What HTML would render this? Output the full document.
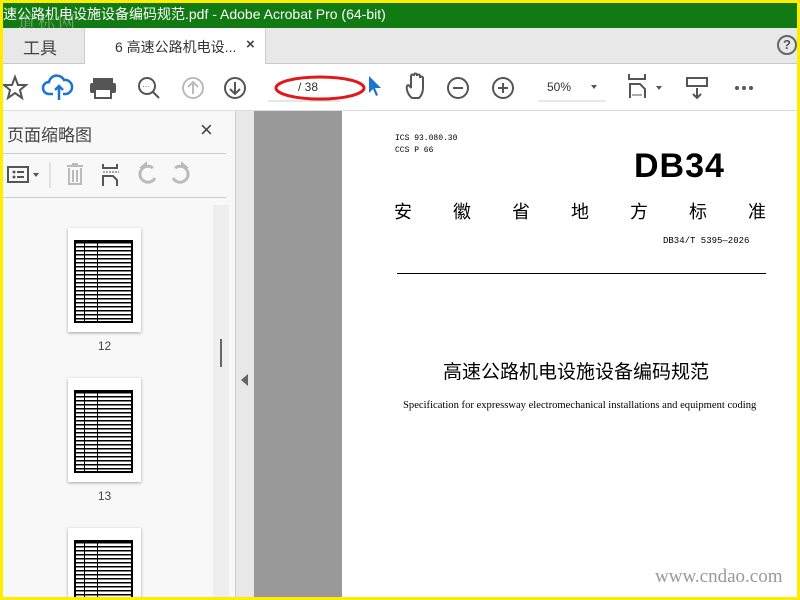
<!DOCTYPE html>
<html><head><meta charset="utf-8"><style>
*{margin:0;padding:0;box-sizing:border-box}
html,body{width:800px;height:600px;overflow:hidden}
body{background:#ffec00;position:relative;font-family:"Liberation Sans","Noto Sans CJK SC",sans-serif}
.a{position:absolute}
.title{left:3px;top:3px;width:794px;height:25px;background:#127a12;color:#fff;font-size:14px;line-height:22px;white-space:nowrap;overflow:hidden}
.tabs{left:3px;top:28px;width:794px;height:36px;background:#e8e8e8;border-bottom:1px solid #c8c8c8}
.tb{left:3px;top:64px;width:794px;height:47px;background:#fff;border-bottom:1px solid #ddd}
.lp{left:3px;top:111px;width:232px;height:486px;background:#f8f8f8;overflow:hidden}
.ico{stroke:#555;fill:none;stroke-width:2}
.thumb{position:absolute;left:65px;width:73px;height:104px;background:#fff;box-shadow:0 1px 3px rgba(0,0,0,.35);overflow:hidden}
.tbl{position:absolute;left:6px;top:12px;width:59px;height:83px;border:2px solid #000;background:repeating-linear-gradient(#000 0 1.5px,#fff 1.5px 4px);}
.tbl:after{content:"";position:absolute;left:8px;top:0;width:14px;height:100%;background:linear-gradient(90deg,#000 0 1px,transparent 1px 13px,#000 13px)}
.num{position:absolute;width:73px;left:65px;text-align:center;font-size:12px;color:#444}
</style></head><body>
<div class="a title">速公路机电设施设备编码规范.pdf - Adobe Acrobat Pro (64-bit)</div>
<div class="a" style="left:18px;top:8px;color:rgba(190,200,190,.55);font-size:17px;font-family:'Noto Serif CJK SC',serif;letter-spacing:3px">道标网</div>
<div class="a tabs">
 <div class="a" style="left:20px;top:6px;font-size:17px;color:#444">工具</div>
 <div class="a" style="left:81px;top:0;width:182px;height:36px;background:#fff;border-left:1px solid #ccc;border-right:1px solid #ccc"></div>
 <div class="a" style="left:112px;top:9px;font-size:14px;color:#333">6 高速公路机电设...</div>
 <div class="a" style="left:243px;top:8px;font-size:15px;color:#444;font-weight:bold">×</div>
 <div class="a" style="left:774px;top:7px;width:20px;height:20px;border:2px solid #666;border-radius:50%;text-align:center;font-size:13px;line-height:16px;font-weight:bold;color:#555">?</div>
</div>
<div class="a tb">
<svg class="a" style="left:0;top:0" width="794" height="47">
 <polygon class="ico" points="12,13 15,21 23,21 17,26 19,34 12,29 5,34 7,26 1,21 9,21"/>
 <path d="M50 30h-4a6 6 0 0 1 0-12a8 8 0 0 1 15-2a6 6 0 0 1 2 14h-3M56 36v-14M52 26l4-4l4 4" stroke="#1b74d2" stroke-width="2.5" fill="none"/>
 <rect x="90" y="14" width="20" height="6" fill="#555"/><rect x="87" y="19" width="26" height="10" rx="2" fill="#555"/><rect x="92" y="25" width="16" height="9" fill="#fff" stroke="#555" stroke-width="2"/>
 <circle class="ico" cx="144" cy="22" r="8"/><path class="ico" d="M150 28l6 6" stroke-width="3"/><text x="139" y="25" font-size="8" fill="#555">···</text>
 <circle cx="190" cy="24" r="10" stroke="#bbb" stroke-width="2" fill="none"/><path d="M190 30v-12M185 23l5-5l5 5" stroke="#bbb" stroke-width="2" fill="none"/>
 <circle class="ico" cx="232" cy="24" r="10"/><path class="ico" d="M232 18v12M227 25l5 5l5-5"/>
 <line x1="265" y1="37" x2="337" y2="37" stroke="#ccc"/>
 <ellipse cx="317" cy="24" rx="44" ry="11" stroke="#e01818" stroke-width="3" fill="none"/>
 <path d="M366 12l12 12h-6l3 7l-2 1l-3-7l-4 4z" fill="#1b74d2"/>
 <path class="ico" d="M409 34c-4-3-6-9-5-12c1-2 3 0 4 2v-12c0-2 3-2 3 0v-1c0-2 3-2 3 0v1c0-2 3-2 3 0v2c0-2 3-2 3 0v10c0 5-2 8-4 10z"/>
 <circle class="ico" cx="455" cy="24" r="10"/><path class="ico" d="M450 24h10"/>
 <circle class="ico" cx="500" cy="24" r="10"/><path class="ico" d="M495 24h10M500 19v10"/>
 <line x1="535" y1="37" x2="603" y2="37" stroke="#ccc"/>
 <path d="M588 21h6l-3 4z" fill="#555"/>
 <path class="ico" d="M626 10v5h16v-5M627 34v-14h10l5 5v9"/><path d="M629 31h10" stroke="#555"/><path d="M653 22h6l-3 4z" fill="#555"/>
 <rect x="684" y="14" width="20" height="8" class="ico"/><path class="ico" d="M694 24v10M690 30l4 4l4-4"/>
 <circle cx="734" cy="24" r="2" fill="#555"/><circle cx="741" cy="24" r="2" fill="#555"/><circle cx="748" cy="24" r="2" fill="#555"/>
</svg>
 <div class="a" style="left:295px;top:16px;font-size:12px;color:#333">/ 38</div>
 <div class="a" style="left:544px;top:16px;font-size:12px;color:#333">50%</div>
</div>
<div class="a lp">
 <div class="a" style="left:4px;top:10px;font-size:17px;color:#444">页面缩略图</div>
 <div class="a" style="left:197px;top:6px;font-size:22px;color:#444">×</div>
 <div class="a" style="left:0;top:42px;width:223px;height:1px;background:#ccc"></div>
 <svg class="a" style="left:0;top:45px" width="230" height="40">
  <rect x="5" y="11" width="20" height="15" class="ico"/><circle cx="11" cy="16" r="1.5" fill="#555"/><circle cx="11" cy="21" r="1.5" fill="#555"/><path d="M14 16h7M14 21h7" stroke="#555" stroke-width="2"/>
  <path d="M30 17h6l-3 4z" fill="#555"/><line x1="47" y1="6" x2="47" y2="32" stroke="#ccc"/>
  <path d="M64 10h16M70 10v-2h4v2M66 12v16h12v-16M70 14v12M74 14v12" stroke="#bbb" stroke-width="2" fill="none"/>
  <path class="ico" d="M100 8v4h14v-4M100 30v-10h10l4 4v6"/><path d="M100 16h16" stroke="#555" stroke-dasharray="2 1"/>
  <path d="M150 12a8 8 0 1 0 2 10" stroke="#bbb" stroke-width="3" fill="none"/><path d="M136 12h8v-7z" fill="#bbb"/>
  <path d="M172 12a8 8 0 1 1 -2 10" stroke="#bbb" stroke-width="3" fill="none"/><path d="M186 12h-8v-7z" fill="#bbb"/>
 </svg>
 <div class="a" style="left:0;top:86px;width:223px;height:1px;background:#ccc"></div>
 <div class="a" style="left:210px;top:94px;width:16px;height:392px;background:#eee"></div>
 <div class="a" style="left:217px;top:228px;width:2px;height:28px;background:#666"></div>
 <div class="thumb" style="top:117px"><div class="tbl"></div></div>
 <div class="num" style="top:228px">12</div>
 <div class="thumb" style="top:267px"><div class="tbl"></div></div>
 <div class="num" style="top:378px">13</div>
 <div class="thumb" style="top:417px;height:69px"><div class="tbl" style="height:57px;border-bottom:none"></div></div>
</div>
<div class="a" style="left:235px;top:111px;width:19px;height:486px;background:#e8e8e8;border-left:1px solid #ccc"></div>
<div class="a" style="left:241px;top:374px;width:0;height:0;border-top:6px solid transparent;border-bottom:6px solid transparent;border-right:7px solid #666"></div>
<div class="a" style="left:254px;top:111px;width:88px;height:486px;background:#999"></div>
<div class="a" style="left:342px;top:111px;width:455px;height:486px;background:#fff"></div>
<div class="a" style="left:395px;top:133px;font-size:8px;line-height:12px;color:#000;font-family:'Liberation Mono',monospace">ICS 93.080.30<br>CCS P 66</div>
<div class="a" style="left:634px;top:146px;font-size:34px;font-weight:bold;letter-spacing:1px;font-family:'Liberation Sans',sans-serif;line-height:40px">DB34</div>
<div class="a" style="left:394px;top:199px;width:372px;display:flex;justify-content:space-between;font-size:18px;font-family:'Noto Sans CJK SC',sans-serif;line-height:24px"><span>安</span><span>徽</span><span>省</span><span>地</span><span>方</span><span>标</span><span>准</span></div>
<div class="a" style="left:663px;top:236px;font-size:9px;font-family:'Liberation Mono',monospace">DB34/T 5395—2026</div>
<div class="a" style="left:397px;top:273px;width:369px;height:1px;background:#000"></div>
<div class="a" style="left:443px;top:358px;font-size:19px;font-family:'Noto Sans CJK SC',sans-serif;line-height:26px">高速公路机电设施设备编码规范</div>
<div class="a" style="left:403px;top:400px;font-size:10.6px;font-family:'Liberation Serif',serif;white-space:nowrap">Specification for expressway electromechanical installations and equipment coding</div>
<div class="a" style="left:655px;top:566px;font-size:19px;color:#999;font-family:'Liberation Serif',serif">www.cndao.com</div>
</body></html>
